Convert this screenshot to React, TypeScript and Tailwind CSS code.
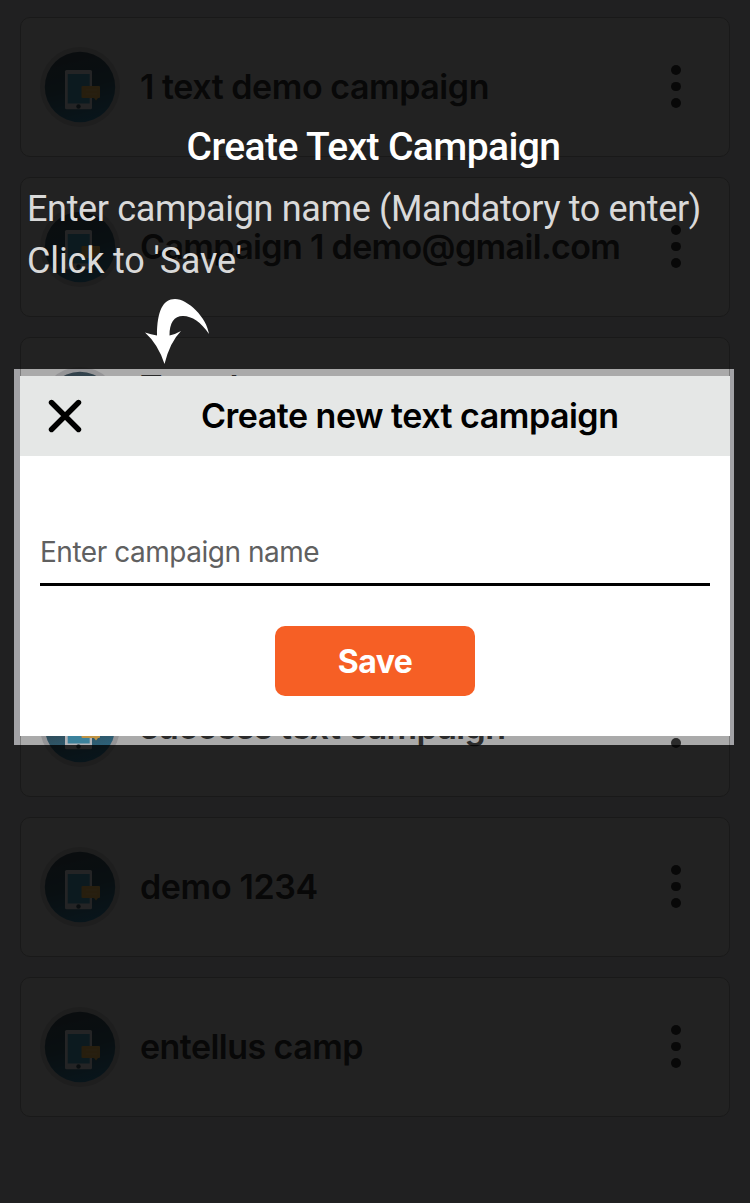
import React from "react";

const campaigns = [
  { name: "1 text demo campaign", tracking: "tracking-[-0.45px]" },
  { name: "Campaign 1 demo@gmail.com", tracking: "tracking-[-0.65px]" },
  { name: "Text demo\nmessage", tracking: "tracking-[-0.5px]" },
  { name: "new camp", tracking: "tracking-[-0.5px]" },
  { name: "success text campaign", tracking: "tracking-[-0.65px]" },
  { name: "demo 1234", tracking: "tracking-[-0.35px]" },
  { name: "entellus camp", tracking: "tracking-[-0.55px]" },
];

function CampaignIcon() {
  return (
    <svg className="size-20 shrink-0" viewBox="0 0 80 80">
      <defs>
        <linearGradient id="disc" x1="0.35" y1="0" x2="0.6" y2="1">
          <stop offset="0" stopColor="#33414a" />
          <stop offset="0.5" stopColor="#304c59" />
          <stop offset="1" stopColor="#2c6b88" />
        </linearGradient>
      </defs>
      <circle cx="40" cy="40" r="40" fill="#949496" />
      <circle cx="40" cy="40" r="35.2" fill="url(#disc)" />
      <rect x="25" y="23" width="27" height="39.3" rx="1.5" fill="#b4b4b8" />
      <rect x="27.7" y="27" width="22" height="29.5" fill="#3c829c" />
      <circle cx="38.5" cy="59.5" r="2.2" fill="#344650" />
      <path d="M42.5 39H59a1 1 0 0 1 1 1v10a1 1 0 0 1-1 1h-1l-2 2.5-2-2.5H42.5a1 1 0 0 1-1-1V40a1 1 0 0 1 1-1z" fill="#c09445" />
      <path d="M46 43h11M46 47h11" stroke="#cba968" strokeWidth="0.8" />
    </svg>
  );
}

function CampaignRow({ name, tracking }: { name: string; tracking: string }) {
  return (
    <div className="flex h-[140px] shrink-0 items-center rounded-[10px] border border-[#7c7c7c] bg-[#aaaaaa] pl-[19px] pr-[48px]">
      <CampaignIcon />
      <div className={`ml-5 flex-1 whitespace-pre-line text-[34px] font-semibold leading-[38px] text-[#2b2b2b] ${tracking}`}>
        {name}
      </div>
      <div className="-mt-px flex flex-col gap-[7px]">
        <span className="size-[9.6px] rounded-full bg-[#2b2b2b]" />
        <span className="size-[9.6px] rounded-full bg-[#2b2b2b]" />
        <span className="size-[9.6px] rounded-full bg-[#2b2b2b]" />
      </div>
    </div>
  );
}

export default function App() {
  return (
    <div className="relative h-[1203px] w-[750px] overflow-hidden bg-[#a2a2a6] font-['Inter',sans-serif]">
      <div className="flex flex-col gap-5 px-5 pt-[17px]">
        {campaigns.map((campaign) => (
          <CampaignRow key={campaign.name} {...campaign} />
        ))}
      </div>

      <div className="absolute left-[14px] top-[369px] h-[376px] w-[720px] px-1.5 pt-[7px] shadow-[0_0_0_1300px_rgba(0,0,0,0.8)]">
        <div className="flex h-[360px] w-[710px] flex-col bg-white">
          <div className="flex h-20 items-center bg-[#e5e7e6] pl-7">
            <svg className="size-[34px]" viewBox="0 0 34 34" fill="none" stroke="#000" strokeWidth="5.4" strokeLinecap="round">
              <path d="M3.5 3.5L30.5 30.5M30.5 3.5L3.5 30.5" />
            </svg>
            <h2 className="ml-[119px] whitespace-nowrap pb-px text-[34px] font-semibold tracking-[-0.5px] text-black">Create new text campaign</h2>
          </div>
          <div className="flex flex-col items-center px-5 pt-[70px]">
            <div className="flex h-[60px] w-full border-b-[3px] border-black text-[28px] leading-[52px] tracking-[-0.47px] text-[#606060]">Enter campaign name</div>
            <button className="mt-10 h-[70px] w-[200px] rounded-[10px] bg-[#f65f25] pt-px text-[32px] font-bold tracking-[-0.6px] text-white">Save</button>
          </div>
        </div>
      </div>

      <div className="absolute inset-x-0 top-[122px] px-[27px] font-['Roboto',sans-serif]">
        <h1 className="pr-[3px] text-center text-[39px] font-medium leading-[50px] tracking-[-0.6px] text-white">Create Text Campaign</h1>
        <p className="mt-[11px] whitespace-nowrap text-[36px] leading-[52px] tracking-[-0.35px] text-[#d9d9d9]">
          Enter campaign name (Mandatory to enter)
          <br />
          <span className="tracking-[-0.15px]">Click to 'Save'</span>
        </p>
      </div>

      <svg className="absolute left-[144px] top-[298px] h-[66px] w-[66px]" viewBox="0 0 66 66" fill="#fff">
        <path d="M1 34.5Q7 36.5 13 37.5C13 13 19 1 31 1C44 1 63 20 65 36C57 24 48 18 39 18C30 18 25.5 25 25.5 37.5Q31 36.5 37 33Q26 44 20.500 66Q14 46 1 34.5Z" />
      </svg>
    </div>
  );
}
